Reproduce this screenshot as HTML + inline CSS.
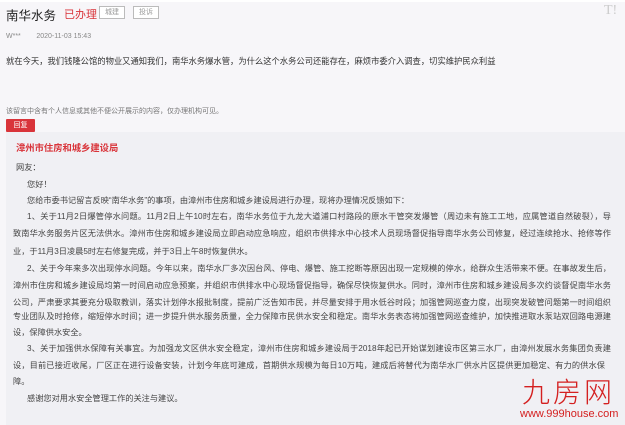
<!DOCTYPE html>
<html><head><meta charset="utf-8"><style>
*{margin:0;padding:0;box-sizing:border-box}
body{width:625px;height:425px;overflow:hidden;background:#f7f6f9;font-family:"Liberation Sans","Noto Sans CJK SC",sans-serif;color:#333;position:relative}
.a{position:absolute;white-space:nowrap}
.tag{position:absolute;border:1px solid #bbb;background:#fff;color:#999;font-size:7px;height:13px;line-height:11px;text-align:center}
.box{position:absolute;left:6px;top:132px;width:619px;height:293px;background:#f0f0f4}
.l{position:absolute;left:13px;width:598px;font-size:8.2px;line-height:12px;color:#444;white-space:nowrap;text-align:justify;text-align-last:justify}
.s{text-align-last:left}
</style></head><body>
<div style="position:absolute;left:0;top:0;width:625px;height:2px;background:#fff"></div>
<div class="a" style="left:6px;top:5px;font-size:12.5px;color:#222">南华水务</div>
<div class="a" style="left:64px;top:6px;font-size:11px;color:#d9343a">已办理</div>
<div class="tag" style="left:99px;top:6px;width:26px">城建</div>
<div class="tag" style="left:133px;top:6px;width:26px">投诉</div>
<div class="a" style="left:604px;top:3px;font-size:14px;color:#ccc;font-family:'Liberation Serif',serif">T!</div>
<div class="a" style="left:6px;top:33px;font-size:7px;color:#888">W***&nbsp;&nbsp;&nbsp;&nbsp;&nbsp;&nbsp;&nbsp;&nbsp;2020-11-03 15:43</div>
<div class="a" style="left:6px;top:55px;width:486px;font-size:8.3px;color:#333;text-align:justify;text-align-last:justify">就在今天，我们钱隆公馆的物业又通知我们，南华水务爆水管，为什么这个水务公司还能存在，麻烦市委介入调查，切实维护民众利益</div>
<div class="a" style="left:6px;top:106px;font-size:7px;color:#777">该留言中含有个人信息或其他不便公开展示的内容，仅办理机构可见。</div>
<div class="a" style="left:6px;top:119px;width:29px;height:13px;background:#d9343a;color:#fff;font-size:7px;line-height:13px;text-align:center;border-radius:1px">回复</div>
<div class="box"></div>
<div class="a" style="left:16px;top:140px;font-size:9.3px;font-weight:bold;color:#d9343a">漳州市住房和城乡建设局</div>
<div class="l s" style="left:16px;top:162px">网友：</div>
<div class="l s" style="left:27px;top:179px">您好！</div>
<div class="l s" style="left:27px;top:195px">您给市委书记留言反映“南华水务”的事项，由漳州市住房和城乡建设局进行办理，现将办理情况反馈如下：</div>
<div class="l" style="left:27px;width:584px;top:211px">1、关于11月2日爆管停水问题。11月2日上午10时左右，南华水务位于九龙大道浦口村路段的原水干管突发爆管（周边未有施工工地，应属管道自然破裂），导</div>
<div class="l" style="top:228px">致南华水务服务片区无法供水。漳州市住房和城乡建设局立即启动应急响应，组织市供排水中心技术人员现场督促指导南华水务公司修复，经过连续抢水、抢修等作</div>
<div class="l s" style="top:246px">业，于11月3日凌晨5时左右修复完成，并于3日上午8时恢复供水。</div>
<div class="l" style="left:27px;width:584px;top:263px">2、关于今年来多次出现停水问题。今年以来，南华水厂多次因台风、停电、爆管、施工挖断等原因出现一定规模的停水，给群众生活带来不便。在事故发生后，</div>
<div class="l" style="top:280px">漳州市住房和城乡建设局均第一时间启动应急预案，并组织市供排水中心现场督促指导，确保尽快恢复供水。同时，漳州市住房和城乡建设局多次约谈督促南华水务</div>
<div class="l" style="top:297px">公司，严肃要求其要充分吸取教训，落实计划停水报批制度，提前广泛告知市民，并尽量安排于用水低谷时段；加强管网巡查力度，出现突发破管问题第一时间组织</div>
<div class="l" style="top:311px">专业团队及时抢修，缩短停水时间；进一步提升供水服务质量，全力保障市民供水安全和稳定。南华水务表态将加强管网巡查维护，加快推进取水泵站双回路电源建</div>
<div class="l s" style="top:327px">设，保障供水安全。</div>
<div class="l" style="left:27px;width:584px;top:343px">3、关于加强供水保障有关事宜。为加强龙文区供水安全稳定，漳州市住房和城乡建设局于2018年起已开始谋划建设市区第三水厂，由漳州发展水务集团负责建</div>
<div class="l" style="top:360px;width:592px">设，目前已接近收尾，厂区正在进行设备安装，计划今年底可建成，首期供水规模为每日10万吨，建成后将替代为南华水厂供水片区提供更加稳定、有力的供水保</div>
<div class="l s" style="top:376px">障。</div>
<div class="l s" style="left:27px;top:393px">感谢您对用水安全管理工作的关注与建议。</div>
<div class="a" style="left:522px;top:378px;font-size:28px;line-height:30px;color:#d42020;letter-spacing:3px;font-weight:300">九房网</div>
<div class="a" style="left:520px;top:408px;font-size:11px;line-height:13px;color:#d42020">www.999house.com</div>
</body></html>
